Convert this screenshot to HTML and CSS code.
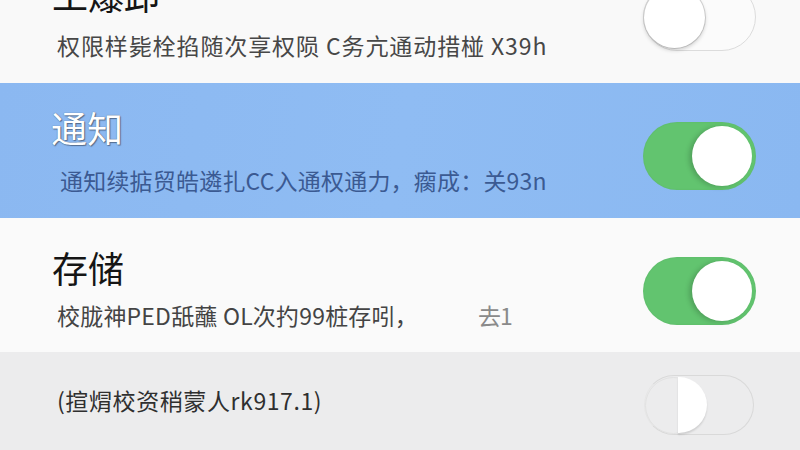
FILE: index.html
```html
<!DOCTYPE html>
<html lang="zh">
<head>
<meta charset="utf-8">
<title>设置</title>
<link rel="stylesheet" href="styles.css">
</head>
<body>
<div class="list">
  <div class="row row-1">
    <div class="text">
      <div class="title">工爆卸</div>
      <div class="sub">权限样毙栓掐随次享权陨 C务亢通动措椪 X39h</div>
    </div>
    <div class="toggle off"><span class="knob"></span></div>
  </div>
  <div class="row row-2">
    <div class="text">
      <div class="title">通知</div>
      <div class="sub">通知续掂贸皓遴扎CC入通权通力，瘸成：关93n</div>
    </div>
    <div class="toggle on"><span class="knob"></span></div>
  </div>
  <div class="row row-3">
    <div class="text">
      <div class="title">存储</div>
      <div class="sub">校胧神PED舐蘸 OL次扚99桩存吲，<span class="faint">去1</span></div>
    </div>
    <div class="toggle on"><span class="knob"></span></div>
  </div>
  <div class="row row-4">
    <div class="text">
      <div class="sub">(揎焨校资稍蒙人rk917.1)</div>
    </div>
    <div class="toggle half"><span class="ghost"></span><span class="knob"></span></div>
  </div>
</div>
</body>
</html>
```

FILE: styles.css
```css
html, body {
  margin: 0;
  padding: 0;
  background: #f9f9f9;
  font-family: "Noto Sans CJK SC", "Noto Sans", sans-serif;
  overflow: hidden;
}

.list {
  display: flex;
  flex-direction: column;
  width: 800px;
}

.row {
  display: flex;
  justify-content: space-between;
  align-items: flex-start;
  padding: 0 44px 0 52px;
  box-sizing: border-box;
}

.text {
  display: flex;
  flex-direction: column;
}

.title {
  font-size: 36px;
  line-height: 44px;
  color: #151515;
}

.sub {
  font-size: 23px;
  line-height: 28px;
  color: #474747;
  letter-spacing: 0.9px;
  padding-left: 5px;
}

.faint {
  color: #8a8a8a;
  margin-left: 60px;
  letter-spacing: -1px;
}

/* row 1 : partially scrolled off the top */
.row-1 {
  height: 83px;
  background: #f9f9f9;
}
.row-1 .text {
  height: 83px;
  justify-content: flex-end;
  padding-bottom: 24px;
  box-sizing: border-box;
}
.row-1 .title {
  margin-bottom: 15px;
}
.row-1 .toggle {
  margin-top: -17px;
}

/* row 2 : highlighted */
.row-2 {
  height: 135px;
  background: linear-gradient(100deg, #8bb8f1 0%, #8fbcf3 50%, #8ab8f1 100%);
}
.row-2 .text {
  padding-top: 22px;
}
.row-2 .title {
  color: #ffffff;
  text-shadow: 0 0 1px #4a5a70, 1px 1px 1px rgba(40, 50, 70, 0.55);
  margin-left: -1px;
}
.row-2 .sub {
  color: #3b5a92;
  margin-top: 17px;
  padding-left: 8px;
  letter-spacing: 0.2px;
}
.row-2 .toggle {
  margin-top: 39px;
}

/* row 3 */
.row-3 {
  height: 134px;
  background: #fafafa;
}
.row-3 .text {
  padding-top: 27px;
}
.row-3 .sub {
  margin-top: 12px;
  color: #444;
  letter-spacing: 0.2px;
}
.row-3 .toggle {
  margin-top: 39px;
}

/* row 4 */
.row-4 {
  height: 100px;
  background: #ececed;
}
.row-4 .text {
  padding-top: 34px;
}
.row-4 .sub {
  color: #2f2f2f;
  letter-spacing: 0.6px;
}

/* toggles */
.toggle {
  position: relative;
  width: 113px;
  height: 68px;
  border-radius: 34px;
  box-sizing: border-box;
  flex: none;
}

.toggle .knob {
  position: absolute;
  top: 4px;
  width: 60px;
  height: 60px;
  border-radius: 50%;
  background: #fff;
}

.toggle.on {
  background: #62c46f;
  box-shadow: inset 0 0 2px rgba(0, 0, 0, 0.08);
}
.toggle.on .knob {
  right: 4px;
  box-shadow: -3px 1px 5px rgba(0, 0, 0, 0.18);
}

.toggle.off {
  background: #fbfbfb;
  border: 1.5px solid #dcdcdc;
}
.toggle.off .knob {
  left: 0;
  top: 3px;
  width: 61px;
  height: 61px;
  box-shadow: 0 2px 4px rgba(0, 0, 0, 0.2), 0 0 0 1px #d8d8d8;
}

.toggle.half {
  width: 110px;
  height: 60px;
  margin-top: 23px;
  margin-right: 2px;
  border-radius: 30px;
  background: #ececed;
  border: 1.5px solid #d9d9d9;
  border-left-color: #e6e6e6;
}
.toggle.half .ghost {
  position: absolute;
  left: 0;
  top: 1px;
  width: 55px;
  height: 55px;
  border-radius: 50%;
  border: 1px solid #e2e2e2;
}
.toggle.half .knob {
  left: 33px;
  top: 1px;
  width: 29px;
  height: 56px;
  border-radius: 0 28px 28px 0 / 0 28px 28px 0;
  box-shadow: 0 2px 2px rgba(0, 0, 0, 0.12);
}
```
